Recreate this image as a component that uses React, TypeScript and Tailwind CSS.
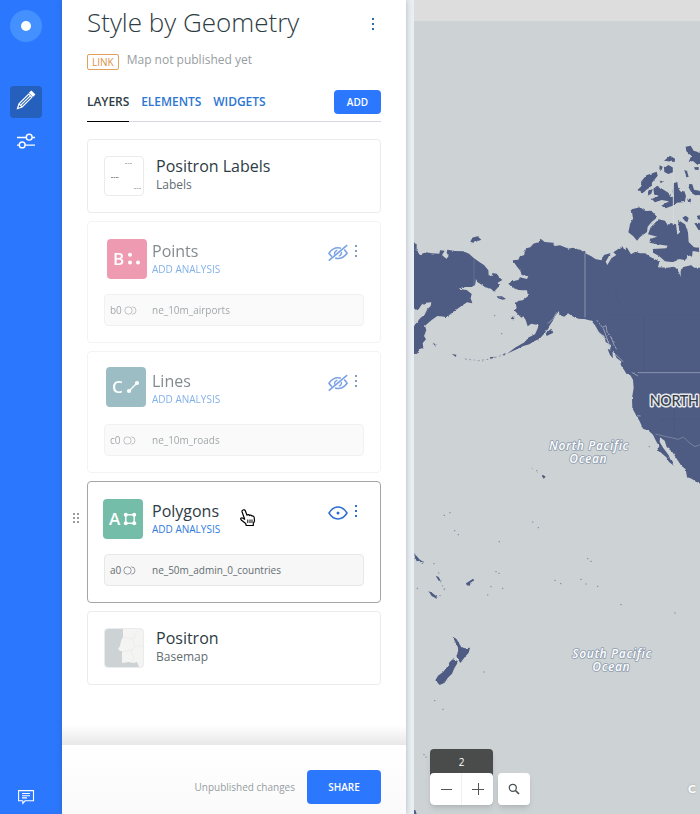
import React from "react";

const sans = "font-['Open_Sans','Noto_Sans',sans-serif]";

function Dots({ className = "" }: { className?: string }) {
  return (
    <svg width="4" height="14" viewBox="0 0 4 14" className={className} fill="currentColor">
      <rect x="1" y="1" width="2" height="2" />
      <rect x="1" y="6" width="2" height="2" />
      <rect x="1" y="11" width="2" height="2" />
    </svg>
  );
}

function Eye({ off }: { off?: boolean }) {
  return (
    <svg width="20" height="18" viewBox="0 0 20 18" fill="none" stroke="currentColor" strokeWidth="1.4">
      {off ? (
        <>
          <path strokeWidth="1.600" d="M12.900 4.300C11.900 3.900 10.900 3.800 10 3.800 6.400 3.800 3.400 5.700 1 9.200 1.900 10.600 2.900 11.700 4 12.600M16.200 5.700C17.200 6.600 18.200 7.800 19 9.200 16.600 12.700 13.600 14.500 10 14.500 9 14.500 8 14.300 7.100 14" />
          <path d="M6.600 10.600C6.200 8.500 7.300 6.600 9.400 6.200M13.400 7.800C13.700 9.800 12.800 11.600 10.800 12.100" />
          <path d="M.8 16.600 19.200 1.200" strokeWidth="1.700" />
        </>
      ) : (
        <>
          <path strokeWidth="1.500" d="M1 9C3.400 5.100 6.400 3.100 10 3.100S16.600 5.100 19 9C16.600 12.900 13.600 14.900 10 14.900S3.400 12.900 1 9Z" />
          <circle cx="10" cy="9" r="1.500" fill="currentColor" stroke="none" />
        </>
      )}
    </svg>
  );
}

function Rings() {
  return (
    <svg width="13" height="9" viewBox="0 0 13 9" fill="none" stroke="#8b9096" strokeWidth=".9">
      <circle cx="4.500" cy="4.500" r="3.700" />
      <path d="M8.300.8a3.700 3.700 0 0 1 0 7.400" />
    </svg>
  );
}

function PointsGlyph() {
  return (
    <svg width="14" height="14" viewBox="0 0 14 14" fill="white">
      <circle cx="3" cy="2.800" r="2" />
      <circle cx="3" cy="10.500" r="2" />
      <circle cx="11" cy="10.500" r="2" />
    </svg>
  );
}

function LineGlyph() {
  return (
    <svg width="14" height="14" viewBox="0 0 14 14" fill="white">
      <path d="M3 11 11 3" stroke="white" strokeWidth="1.200" />
      <circle cx="3" cy="11" r="2.100" />
      <circle cx="11" cy="3" r="2.100" />
    </svg>
  );
}

function PolygonGlyph() {
  return (
    <svg width="14" height="14" viewBox="0 0 14 14" fill="white">
      <rect x="2.800" y="2.800" width="8.400" height="8.400" fill="none" stroke="white" strokeWidth="1.400" />
      <circle cx="2.800" cy="2.800" r="2" />
      <circle cx="11.200" cy="2.800" r="2" />
      <circle cx="2.800" cy="11.200" r="2" />
      <circle cx="11.200" cy="11.200" r="2" />
    </svg>
  );
}

type LayerProps = {
  letter: string;
  name: string;
  source: string;
  table: string;
  tile: string;
  glyph: React.ReactNode;
  active?: boolean;
};

function LayerCard({ letter, name, source, table, tile, glyph, active }: LayerProps) {
  return (
    <div className={`h-[122px] w-[294px] rounded border ${active ? "border-[#a3a5a7]" : "border-[#f2f3f4]"}`}>
      <div className={active ? "" : "opacity-60"}>
        <div className="flex h-[72px]">
          <div className="w-16 shrink-0">
            <div className={`flex h-10 w-10 items-center justify-center gap-[3px] rounded text-[17px] font-semibold leading-10 text-white ${tile}`}>
              <span>{letter}</span>
              {glyph}
            </div>
          </div>
          <div className="w-44 pt-[18px]">
            <div className="text-[16px] leading-[22px] text-[#2e3c43]">{name}</div>
            <div className="text-[10px] leading-[15px] text-[#2e7bdc]">ADD ANALYSIS</div>
          </div>
          <div className={`flex items-start gap-[6px] pt-[22px] ${active ? "text-[#2b6fd4]" : "text-[#2465d3]"}`}>
            <Eye off={!active} />
            <Dots className={active ? "" : "text-[#2e5f94]"} />
          </div>
        </div>
        <div className="mx-4 flex h-8 items-center rounded border border-[#e7e8e9] bg-[#f7f7f7] text-[10px] text-[#636d72]">
          <div className="flex w-[47px] items-center gap-[2px] pl-[5px]">
            <span>{source}</span>
            <Rings />
          </div>
          <span>{table}</span>
        </div>
      </div>
    </div>
  );
}

function BaseCard({ title, kind, children }: { title: string; kind: string; children: React.ReactNode }) {
  return (
    <div className="flex h-[74px] w-[294px] rounded border border-[#e9ebec] pl-4 pt-4">
      <div className="h-10 w-10 overflow-hidden rounded border border-[#e9ebec]">{children}</div>
      <div className="-mt-px pl-3">
        <div className="text-[16px] leading-[22px] text-[#2e3c43]">{title}</div>
        <div className="text-[12px] leading-4 text-[#636d72]">{kind}</div>
      </div>
    </div>
  );
}

function Sidebar() {
  return (
    <nav className="flex w-[62px] shrink-0 flex-col items-center bg-[#2b78ff] pr-[10px] pt-[10px]">
      <div className="flex h-8 w-8 items-center justify-center rounded-full bg-[#4490ff]">
        <div className="h-[10px] w-[10px] rounded-full bg-white" />
      </div>
      <div className="mt-11 flex h-8 w-8 items-center justify-center rounded bg-[#2560bd] pb-[4px]">
        <svg width="20" height="20" viewBox="0 0 20 20" fill="none" stroke="white" strokeWidth="1.200">
          <path d="M1.500 18.500 3 13.900 12.700 4.200 15.800 7.300 6.100 17ZM3 13.900 6.100 17M4.600 15.400 14.200 5.800" />
          <path d="m13.700 2.800 1.700-1.500L18.600 4.500 17 6.100Z" fill="white" />
        </svg>
      </div>
      <svg className="mt-[14px]" width="20" height="18" viewBox="0 0 20 18" fill="none" stroke="white" strokeWidth="1.400">
        <path d="M1 5.500h9.200M16 5.500h3M1 13.100h2.200M9 13.100h10" />
        <circle cx="13.200" cy="5.200" r="2.900" />
        <circle cx="6.200" cy="12.900" r="2.900" />
      </svg>
      <svg className="mb-[9px] mt-auto" width="18" height="16" viewBox="0 0 18 16" fill="none" stroke="white" strokeWidth="1.100">
        <path d="M1.600 1.600h14.900v10.200H8L5.900 14.300 5.700 11.800H1.600ZM5 4.500h8M5 6.700h8M5 8.900h5" />
      </svg>
    </nav>
  );
}

function WorldMap() {
  const halo = { paintOrder: "stroke" } as const;
  return (
    <svg width="286" height="814" viewBox="12 0 858 2442" className="block">
      <defs>
        <filter id="coast" x="0" y="0" width="870" height="2442" filterUnits="userSpaceOnUse" colorInterpolationFilters="sRGB">
          <feTurbulence type="fractalNoise" baseFrequency="0.1" numOctaves="2" seed="7" />
          <feDisplacementMap in="SourceGraphic" scale="7" xChannelSelector="R" yChannelSelector="G" />
        </filter>
      </defs>
      <rect x="12" width="858" height="2442" fill="#cdd2d5" />
      <rect x="12" width="858" height="63" fill="#dddddd" />
      <g fill="#4e5b82" filter="url(#coast)">
        <path d="M-10 725 12 727 20 735 20 752 30 765 34 762 48 757 65 760 88 761 90 751 104 752 96 765 109 777 116 768 110 758 112 749 135 753 160 754 177 761 192 775 208 786 222 795 235 811 236 825 249 828 246 819 260 821 268 832 277 840 263 848 267 859 252 875 243 866 226 862 215 854 203 847 198 837 196 852 186 861 166 861 145 866 170 870 185 882 182 895 187 910 171 907 150 921 130 935 111 951 82 948 65 960 45 977 49 991 42 1008 48 1018 38 1029 40 1043 27 1048 22 1061 -10 1065Z" />
        <path d="M308 781 325 779 330 768 342 766 348 745 361 742 370 731 384 727 392 716 404 726 429 728 436 738 450 736 476 746 488 743 511 749 526 760 544 769 556 777 574 781 582 765 602 759 587 785 592 795 604 775 619 765 610 757 637 739 644 751 650 742 663 763 676 755 690 760 706 760 721 771 740 780 748 785 744 802 773 803 791 800 803 806 812 831 812 813 820 801 843 796 853 803 890 803 890 1460 855 1444 845 1436 831 1431 827 1408 814 1397 798 1373 787 1356 770 1341 764 1322 750 1312 749 1326 760 1344 776 1366 781 1378 792 1397 777 1386 769 1372 754 1359 742 1346 748 1340 738 1323 729 1304 716 1292 699 1286 689 1264 680 1249 667 1225 666 1194 671 1164 669 1139 661 1126 649 1121 642 1109 634 1098 633 1084 620 1074 613 1059 600 1048 604 1036 587 1026 583 1008 568 998 555 976 544 962 523 957 510 957 497 954 486 948 474 940 463 950 448 945 447 933 435 949 428 963 416 981 405 998 389 1016 372 1024 358 1033 340 1038 320 1048 291 1061 315 1043 346 1025 354 1013 375 1003 382 988 386 976 364 971 353 979 347 960 340 949 334 953 324 943 313 931 320 925 317 909 326 902 338 901 354 889 351 871 337 871 327 870 309 864 295 851 306 844 325 840 330 832 351 837 355 829 335 825 331 812 321 800Z" />
        <path d="M665 628 690 622 707 633 724 632 742 652 724 667 713 680 711 696 690 711 681 722 670 709 655 697 661 670 669 657Z" />
        <path d="M746 658 765 662 774 677 782 669 798 673 802 704 808 694 804 660 825 673 834 697 836 726 852 742 865 743 868 756 848 753 846 770 835 765 827 781 808 777 790 787 765 784 748 769 731 759 728 747 769 745 773 737 741 733 719 728 720 716 742 710 714 703 722 682Z" />
        <path d="M680 572 695 558 693 545 709 526 740 515 743 527 727 547 721 562 709 569 705 574 697 580 690 572Z" />
        <path d="M713 587 719 571 728 567 724 581ZM730 566 742 557 762 570 775 578 781 591 792 590 788 576 790 550 802 546 805 567 814 577 823 573 828 588 824 606 801 608 788 617 767 625 754 617 777 604 755 600 735 607 725 597 746 588 732 580ZM762 505 775 495 790 503 789 517 775 522 763 516ZM762 482 780 467 795 476 794 486ZM827 440 842 437 851 452 866 457 880 464 880 493 862 494 849 483 836 486 844 467 829 454ZM823 510 831 513 836 531 829 532ZM838 552 847 553 852 569 868 572 880 588 866 585 856 586 846 580 836 563ZM852 502 866 501 866 510 855 509ZM832 596 843 596 842 607 834 605ZM817 653 827 647 836 654 832 667 825 663ZM862 647 880 643 880 663 863 657ZM853 670 868 668 880 686 866 691ZM749 496 758 500 755 510 748 508ZM749 540 759 545 752 550Z" />
        <path d="M181 725 187 713 202 709 214 719 204 723 190 728ZM260 889 276 889 288 897 278 899 264 895ZM301 950 313 950 312 958 304 957ZM407 1000 424 986 430 998 410 1008ZM593 1047 607 1051 609 1075 600 1065ZM631 1090 649 1093 673 1111 684 1123 681 1142 663 1118 642 1108Z" />
        <path d="M68 1028 80 1034 77 1040ZM125 1062 139 1064 138 1071ZM240 1072 252 1070 246 1076ZM274 1065 287 1059 285 1066ZM398 1424 407 1430 401 1436 396 1429Z" />
        <path d="M128 1910 139 1916 148 1931 154 1942 165 1945 180 1943 176 1958 164 1972 151 1989 146 1981 139 1968 145 1955 143 1940ZM119 1986 128 1978 143 1983 142 1990 133 2005 126 2021 113 2034 104 2048 89 2055 76 2041 84 2027 100 2015 113 1999ZM168 1750 180 1742 189 1736 193 1741 181 1748 180 1757 170 1756ZM55 1773 67 1779 82 1791 80 1796 65 1788ZM12 1663 20 1668 28 1678 41 1687 37 1692 28 1682 20 1684ZM77 1727 86 1731 92 1742 86 1742ZM0 2430 16 2430 24 2455H0Z" />
        <path d="M90 1743 106 1775M363 1405 372 1407M378 1411 388 1416M165 1077 205 1082 240 1077 290 1062" fill="none" stroke="#7a859b" strokeWidth="2.500" strokeDasharray="5 8" />
      </g>
      <g fill="#cdd2d5" filter="url(#coast)">
        <path d="M0 931 26 928 34 915 48 908 64 907 62 918 51 929 44 944 31 954 12 979H0Z" />
      </g>
      <g fill="none" stroke="#a2acbd" strokeWidth="3" filter="url(#coast)">
        <path d="M560 960 577 982 588 977 591 996 604 1014 612 1035 620 1048M568 997 583 1014 598 1023M580 985 600 1040M615 1062 640 1085M665 1117 684 1128M680 1247 692 1248M415 970 430 955 440 937" strokeWidth="2.500" />
        <path d="M748 785 775 791 803 785 831 780 850 795" strokeWidth="4" stroke="#cdd2d5" />
      </g>
      <g fill="none" stroke="#8a95ae" strokeWidth="3">
        <path d="M525 760V952" />
        <path d="M683 1118H870" />
        <path d="M192 778V858" stroke="#64708f" />
        <path d="M736 1302 805 1318 820 1311 840 1330 855 1340 870 1334" strokeWidth="2" />
        <path d="M790 500V675" stroke="#d6dadc" />
      </g>
      <g stroke="#475278" strokeWidth="2" fill="none" opacity=".3">
        <path d="M580 945H870M703 950V1115M610 850 630 915M750 1258H870M793 1190V1310" />
      </g>
      <g fill="#7c879d">
        {[
          [134, 1592], [145, 1604], [368, 1566], [385, 1583], [103, 1546], [120, 1538], [533, 1676], [543, 1684],
          [258, 1715], [267, 1720], [243, 1760], [278, 1765], [233, 1785], [452, 1751], [563, 1759], [528, 1752],
          [435, 1741], [633, 1814], [795, 1839], [222, 2016], [22, 1765], [72, 1691], [90, 1787], [86, 1719],
          [74, 2102], [99, 2128], [42, 2264], [48, 2271], [254, 947], [275, 1001], [718, 1340], [513, 1738], [268, 1625],
        ].map(([x, y]) => (
          <rect key={`${x}-${y}`} x={x - 2} y={y - 1.500} width="4" height="3" />
        ))}
      </g>
      <g textAnchor="middle" strokeLinejoin="round">
        <g className="font-['Open_Sans',sans-serif]" fontSize="36" fontStyle="italic" fontWeight="600" fill="#fff" stroke="#8d9cae" strokeWidth="5" letterSpacing="2" style={halo}>
          <text x="537" y="1349">North Pacific</text>
          <text x="535" y="1388">Ocean</text>
          <text x="606" y="1975">South Pacific</text>
          <text x="604" y="2014">Ocean</text>
        </g>
        <text className="font-['Lato',sans-serif]" x="719" y="1218" textAnchor="start" fontSize="43" fontWeight="500" fill="#363e4b" stroke="#e5e8ec" strokeWidth="9" letterSpacing="-1" style={halo}>NORTH</text>
      </g>
    </svg>
  );
}

function MapControls() {
  return (
    <div className="absolute bottom-[9px] left-4 flex items-end gap-[5px]">
      <div className="w-[63px] rounded bg-[#4a4c4c] shadow-md">
        <div className="flex h-6 items-center justify-center pt-[2px] text-[10px] leading-6 text-white">2</div>
        <div className="flex h-8 rounded bg-white">
          <div className="flex w-8 items-center justify-center border-r border-[#f0f0f0] pl-px">
            <div className="h-px w-[11px] bg-[#555]" />
          </div>
          <div className="flex flex-1 items-center justify-center">
            <svg width="12" height="12" viewBox="0 0 12 12"><path d="M0 6.500h12M6.500 0v12" stroke="#555" /></svg>
          </div>
        </div>
      </div>
      <div className="flex h-8 w-8 items-center justify-center rounded bg-white shadow-md">
        <svg width="12" height="12" viewBox="0 0 12 12" fill="none" stroke="#4d5254">
          <circle cx="4.800" cy="4.800" r="3.500" strokeWidth="1.300" />
          <path d="m7.500 7.500 3.500 3.500" strokeWidth="1.700" />
        </svg>
      </div>
    </div>
  );
}

export default function App() {
  return (
    <div className={`relative flex h-[814px] w-[700px] overflow-hidden bg-white ${sans}`}>
      <Sidebar />
      <main className="z-10 flex w-[344px] shrink-0 flex-col bg-white shadow-[0_0_6px_rgba(60,75,90,0.35)]">
        <header className="h-[139px] shrink-0 px-[25px]">
          <div className="flex h-[46px] items-start justify-between pr-[6px] pt-1">
            <h1 className="whitespace-nowrap text-[26px] font-light leading-[37px] text-[#2e3c43]">Style by Geometry</h1>
            <Dots className="mt-[13px] text-[#2e6da4]" />
          </div>
          <div className="flex items-start gap-2 pt-[6px]">
            <div className="mt-[2px] h-4 rounded-[2px] border border-[#e0a15c] px-1 text-[10px] leading-[15px] text-[#db9145]">LINK</div>
            <div className="text-[12px] leading-4 text-[#979da1]">Map not published yet</div>
          </div>
          <div className="mt-[17px] flex h-[35px] items-start justify-between border-b border-[#d5d9df] text-[12px] font-semibold">
            <div className="flex gap-3 whitespace-nowrap leading-6 tracking-[-0.05px] text-[#2e76d2]">
              <span className="h-[35px] border-b border-black pt-[3px] text-[#2e3c43]">LAYERS</span>
              <span className="pt-[3px]">ELEMENTS</span>
              <span className="pt-[3px]">WIDGETS</span>
            </div>
            <button className="mt-[3px] h-6 w-[47px] rounded bg-[#2b78ff] text-[10px] leading-6 text-white">ADD</button>
          </div>
        </header>
        <section className="flex flex-1 flex-col gap-2 pl-[25px]">
          <BaseCard title="Positron Labels" kind="Labels">
            <svg width="38" height="38" viewBox="0 0 38 38" stroke="#8c9295" strokeWidth="1">
              <path d="M20 6.500h7M29 31.500h7" strokeDasharray="2 .5" opacity=".65" />
              <path d="M6 20.500h8" strokeDasharray="2 .5" />
            </svg>
          </BaseCard>
          <LayerCard letter="B" name="Points" source="b0" table="ne_10m_airports" tile="ml-[19px] mt-[17px] bg-[#e35a80]" glyph={<PointsGlyph />} />
          <LayerCard letter="C" name="Lines" source="c0" table="ne_10m_roads" tile="ml-[18px] mt-[15px] bg-[#5b929e]" glyph={<LineGlyph />} />
          <div className="relative">
            <svg className="absolute left-[-15px] top-8" width="8" height="12" viewBox="0 0 8 12" fill="#999d9f">
              <path d="M1 0h2v2H1zM5 0h2v2H5zM1 4h2v2H1zM5 4h2v2H5zM1 8h2v2H1zM5 8h2v2H5z" />
            </svg>
            <LayerCard active letter="A" name="Polygons" source="a0" table="ne_50m_admin_0_countries" tile="ml-[15px] mt-[17px] bg-[#74bda8]" glyph={<PolygonGlyph />} />
            <svg className="absolute left-[153px] top-7" width="16" height="18" viewBox="0 0 16 18" fill="white" stroke="black" strokeWidth="1.200" strokeLinejoin="round">
              <path d="M3 1C4 .4 5 1 5.400 2L7 6.200C7.700 5.400 9 5.500 9.500 6.500 10.300 5.800 11.600 6 12 7.100 13 6.600 14 7.300 14.200 8.500L14.500 12 13.300 14.500V16.500H6.200L5.700 14.500 1.200 11C0 9.500 1 8.500 2.400 9L4.700 10.300 2.100 3C1.800 2 2.200 1.400 3 1Z" />
              <path d="M7.800 10.500v3.500M10 10.500v3.500M12 10.500v3.500" strokeWidth="1" />
            </svg>
          </div>
          <BaseCard title="Positron" kind="Basemap">
            <svg width="38" height="38" viewBox="0 0 38 38">
              <path fill="#cdd2d5" d="M0 0h38v38H0z" />
              <path fill="#f4f4f2" d="M18 0H38V38H34L32 33 28 34 24 33 17 34 17 22 15 22 13 20 15 17 16 12 18 8Z" />
              <path fill="none" stroke="#e4e4e2" strokeWidth=".5" d="m18 8 9 2 3 7-4 6 3 5-2 5M28 10l4-8M31 17h7M17 23l10-2" />
            </svg>
          </BaseCard>
        </section>
        <div className="h-5 shrink-0 bg-linear-to-b from-white to-[#e8e8e8]" />
        <footer className="flex h-[69px] shrink-0 items-start justify-end gap-3 bg-linear-to-b from-white to-[#fafafa] pr-[25px] pt-[25px]">
          <span className="text-[10px] leading-[34px] text-[#979da1]">Unpublished changes</span>
          <button className="h-[34px] w-[74px] rounded bg-[#2b78ff] text-[10px] font-semibold text-white">SHARE</button>
        </footer>
      </main>
      <div className="w-2 shrink-0 bg-[#eaeff3]" />
      <aside className="relative flex-1 overflow-hidden">
        <WorldMap />
        <MapControls />
        <div className="absolute bottom-4 left-[274px] font-['Lato',sans-serif] text-[12px] font-black leading-[18px] text-white [text-shadow:0_0_2px_#999]">C</div>
      </aside>
    </div>
  );
}
